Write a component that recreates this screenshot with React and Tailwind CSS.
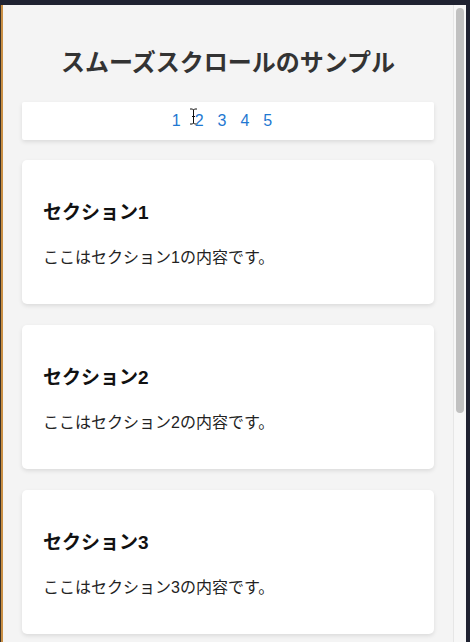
import React from 'react';

const sections = [1, 2, 3];

const App = () => {
  return (
    <div
      className="flex h-[642px] w-[470px] flex-col overflow-hidden bg-[#1f2231]"
      style={{ fontFamily: '"Liberation Sans", "Noto Sans CJK JP", sans-serif' }}
    >
      <div className="h-[5px] shrink-0 bg-[#1f2231]" />
      <div className="flex min-h-0 flex-1">
        {/* window edge */}
        <div className="w-[1px] shrink-0 bg-[#3a3128]" />
        <div className="w-[2px] shrink-0 bg-[#c98f45]" />

        <main className="relative min-h-0 flex-1 overflow-hidden bg-[#f4f4f4] pl-[19px] pr-[19px]">
          <h1 className="pt-[42px] text-center text-[24px] font-bold leading-[32px] text-[#333]">
            スムーズスクロールのサンプル
          </h1>

          <nav className="mt-[23px] flex h-[38px] items-center justify-center gap-[14px] rounded-[2px] bg-white pr-3 shadow-[0_2px_4px_rgba(0,0,0,0.1)]">
            {[1, 2, 3, 4, 5].map((n) => (
              <a key={n} href={`#section${n}`} className="text-[16px] leading-[20px] text-[#1f78d1]">
                {n}
              </a>
            ))}
          </nav>

          <div className="mt-[20px] flex flex-col gap-[21px]">
            {sections.map((n) => (
              <section
                key={n}
                id={`section${n}`}
                className="h-[144px] shrink-0 rounded-[5px] bg-white px-[21px] pt-[39px] shadow-[0_2px_4px_rgba(0,0,0,0.1)]"
              >
                <h2 className="text-[19px] font-bold leading-[28px] text-[#111]">セクション{n}</h2>
                <p className="mt-[19px] text-[16px] leading-[24px] text-[#222]">
                  ここはセクション{n}の内容です。
                </p>
              </section>
            ))}
          </div>

          {/* text cursor over the nav */}
          <svg className="absolute left-[186px] top-[103px]" width="9" height="17" viewBox="0 0 9 17">
            <path d="M1 1h2.5l1 1 1-1H8M4.5 2v13M1 16h2.5l1-1 1 1H8M3 8.5h3" stroke="#fff" strokeWidth="2.2" fill="none" />
            <path d="M1 1h2.5l1 1 1-1H8M4.5 2v13M1 16h2.5l1-1 1 1H8M3 8.5h3" stroke="#111" strokeWidth="1" fill="none" />
          </svg>
        </main>

        {/* scrollbar */}
        <div className="w-[13px] shrink-0 border-l border-[#e6e6e6] bg-[#f7f7f7] pl-[2px] pt-[3px]">
          <div className="h-[405px] w-[8px] rounded-full bg-[#c1c1c1]" />
        </div>
        <div className="w-[4px] shrink-0 bg-[#1f2231]" />
      </div>
    </div>
  );
};

export default App;
